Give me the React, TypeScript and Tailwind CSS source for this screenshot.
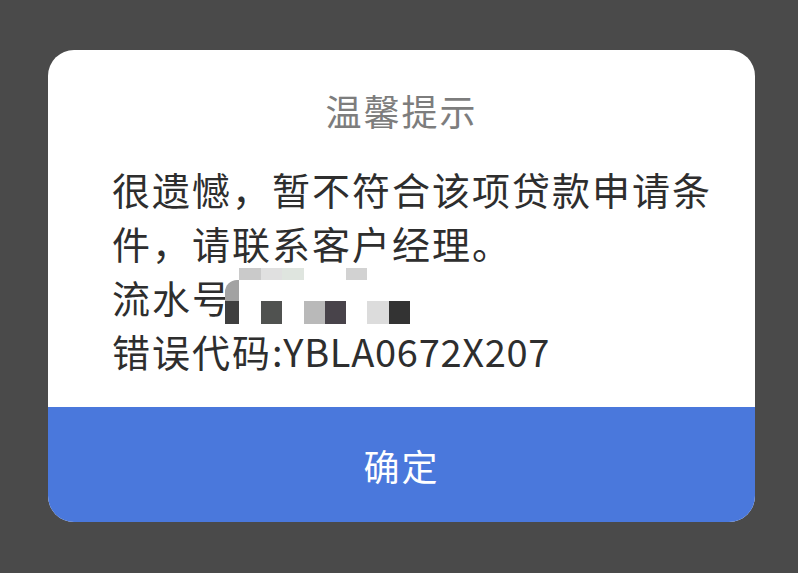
const cjk = { fontFamily: '"Noto Sans CJK SC", "Noto Sans", sans-serif' };

// pixelated cover over the serial number, one array per row
const mosaicCols = [14, 22, 21, 22, 21, 21, 21, 22, 21];
const mosaicRows: { h: number; cells: string[] }[] = [
  { h: 12, cells: ['bg-white', 'bg-[#cacaca]', 'bg-[#e0e0e0]', 'bg-[#dfe5df]', 'bg-white', 'bg-white', 'bg-[#d2d2d2]', 'bg-white', 'bg-white'] },
  { h: 21, cells: ['bg-[#a2a2a2]', 'bg-white', 'bg-white', 'bg-white', 'bg-white', 'bg-white', 'bg-white', 'bg-white', 'bg-white'] },
  { h: 23, cells: ['bg-[#3f3f3f]', 'bg-white', 'bg-[#505250]', 'bg-white', 'bg-[#b9b9b9]', 'bg-[#48434a]', 'bg-white', 'bg-[#dcdcdc]', 'bg-[#333333]'] },
];

function Mosaic() {
  return (
    <span className="ml-[-7px] inline-flex flex-col blur-[0.6px]">
      {mosaicRows.map((row, r) => (
        <span key={r} className="flex" style={{ height: row.h }}>
          {row.cells.map((c, i) => (
            <span
              key={i}
              className={`${c} ${r === 1 && i === 0 ? 'rounded-tl-[12px]' : ''}`}
              style={{ width: mosaicCols[i] }}
            />
          ))}
        </span>
      ))}
    </span>
  );
}

export default function App() {
  return (
    <div className="w-[798px] h-[573px] bg-[#4a4a4a] pt-[50px] pl-[48px]" style={cjk}>
      <div className="w-[707px] h-[472px] bg-white rounded-[26px] overflow-hidden flex flex-col">
        <div className="pt-[33px] text-center text-[36px] leading-[54px] tracking-[2px] text-[#7d7d7d]">
          温馨提示
        </div>
        <div className="mt-[25px] pl-[64px] pr-[40px] text-[38px] leading-[54px] tracking-[2px] text-[#2e2e2e]">
          <p>很遗憾，暂不符合该项贷款申请条件，请联系客户经理。</p>
          <p className="flex items-end h-[54px]">
            <span>流水号</span>
            <Mosaic />
          </p>
          <p>
            错误代码<span className="tracking-[0.7px]">:YBLA0672X207</span>
          </p>
        </div>
        <button className="mt-auto h-[115px] bg-[#4a78dc] text-white text-[36px] tracking-[2px] flex items-center justify-center">
          确定
        </button>
      </div>
    </div>
  );
}
